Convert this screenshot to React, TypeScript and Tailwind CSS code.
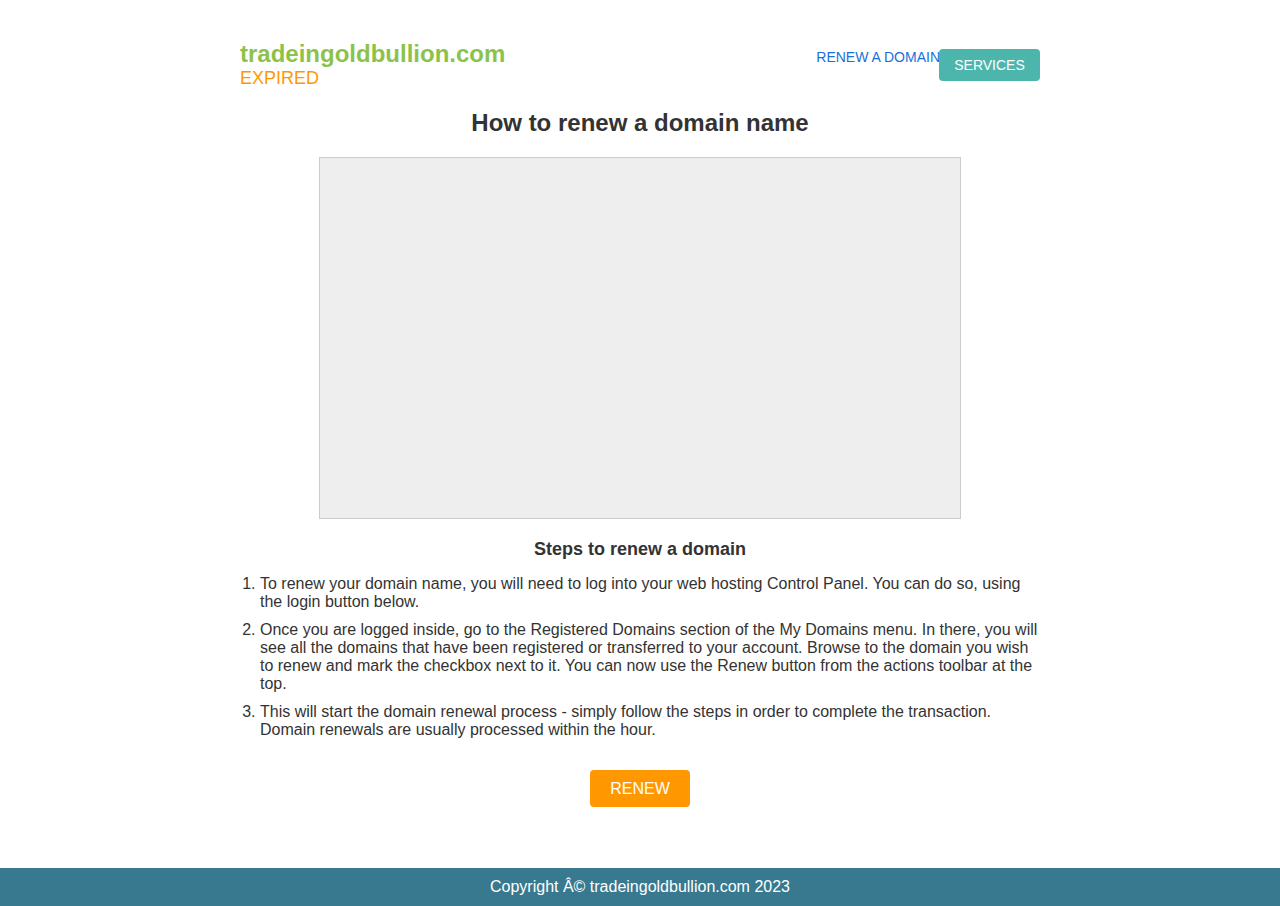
const steps = [
  "To renew your domain name, you will need to log into your web hosting Control Panel. You can do so, using the login button below.",
  "Once you are logged inside, go to the Registered Domains section of the My Domains menu. In there, you will see all the domains that have been registered or transferred to your account. Browse to the domain you wish to renew and mark the checkbox next to it. You can now use the Renew button from the actions toolbar at the top.",
  "This will start the domain renewal process - simply follow the steps in order to complete the transaction. Domain renewals are usually processed within the hour.",
];

export default function App() {
  return (
    <div className="min-h-screen flex flex-col bg-white text-[#333] font-['Liberation_Sans',Arial,sans-serif]">
      <main className="w-[800px] mx-auto pt-[42px] pb-[59px]">
        <header className="flex justify-between items-start">
          <div className="flex flex-col">
            <span className="text-[24px] leading-[24px] font-bold text-[#8bc34a]">tradeingoldbullion.com</span>
            <span className="text-[18px] leading-[24px] text-[#ff9800]">EXPIRED</span>
          </div>
          <nav className="flex items-start mt-[7px]">
            <a href="#" className="text-[14px] leading-[16px] text-[#1a6fdb]">RENEW A DOMAIN</a>
            <a href="#" className="h-[32px] w-[101px] -ml-px flex items-center justify-center rounded bg-[#4db6ac] text-white text-[14px]">
              SERVICES
            </a>
          </nav>
        </header>

        <h1 className="mt-[19px] text-center text-[24px] leading-[28px] font-bold">How to renew a domain name</h1>

        <div className="mt-[20px] mx-auto w-[642px] h-[362px] bg-[#eeeeee] border border-[#cccccc]" />

        <h2 className="mt-[20px] text-center text-[18px] leading-[20px] font-bold">Steps to renew a domain</h2>

        <ol className="mt-[16px] list-decimal pl-[20px] flex flex-col gap-[10px]">
          {steps.map((s) => (
            <li key={s} className="text-[16px] leading-[18px]">{s}</li>
          ))}
        </ol>

        <div className="mt-[31px] flex justify-center">
          <a href="#" className="w-[100px] h-[37px] flex items-center justify-center rounded bg-[#ff9800] text-white text-[16px]">
            RENEW
          </a>
        </div>
      </main>

      <footer className="mt-auto h-[38px] flex items-center justify-center bg-[#38798f] text-white text-[16px]">
        Copyright Â© tradeingoldbullion.com 2023
      </footer>
    </div>
  );
}
